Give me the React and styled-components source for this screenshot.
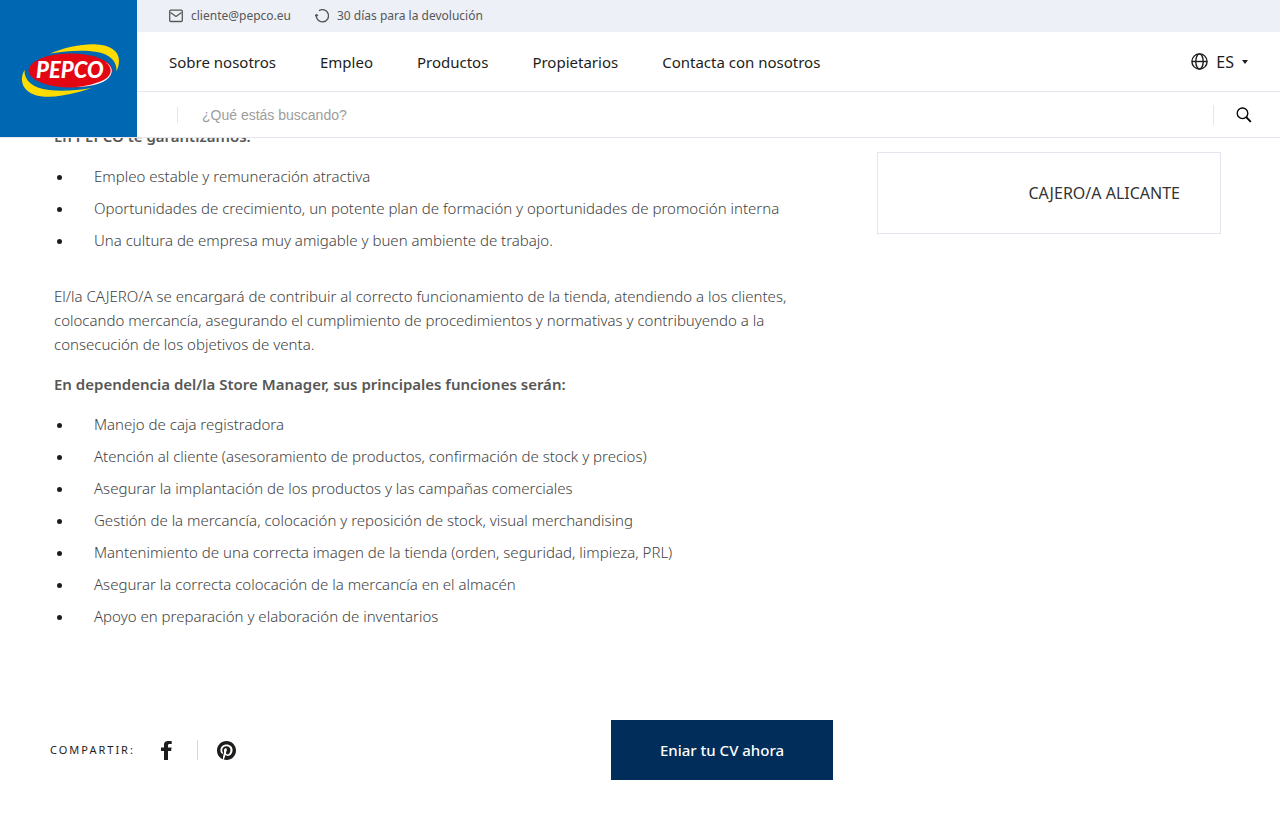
import React from 'react';
import styled, { createGlobalStyle } from 'styled-components';

const GlobalStyle = createGlobalStyle`
  *, *::before, *::after { box-sizing: border-box; }
  body {
    margin: 0;
    background: #fff;
    color: #1d1d1b;
    font-family: "Noto Sans", "Open Sans", sans-serif;
    font-size: 15px;
    line-height: 24px;
  }
  a { color: inherit; text-decoration: none; }
  button { font: inherit; cursor: pointer; }
`;

const Header = styled.header`
  position: fixed;
  inset: 0 0 auto 0;
  z-index: 10;
  display: flex;
  align-items: flex-start;
  background: #fff;
  border-bottom: 1px solid #e5e6ed;
`;

const LogoLink = styled.a`
  display: block;
  flex: none;
  width: 137px;
  height: 137px;
  background: #0068b3;
  svg { display: block; }
`;

const HeaderRows = styled.div`
  flex: 1;
  min-width: 0;
`;

const TopBar = styled.div`
  display: flex;
  align-items: center;
  gap: 24px;
  height: 32px;
  padding: 0 32px;
  background: #edf0f7;
  color: #575756;
  font-size: 12px;
`;

const TopItem = styled.div`
  display: flex;
  align-items: center;
  gap: 8px;
`;

const NavBar = styled.div`
  display: flex;
  align-items: center;
  justify-content: space-between;
  height: 60px;
  padding: 0 32px;
  border-bottom: 1px solid #e5e6ed;
`;

const Nav = styled.nav`
  display: flex;
  gap: 44px;
`;

const LangButton = styled.button`
  display: flex;
  align-items: center;
  gap: 8px;
  padding: 0;
  border: 0;
  background: none;
  color: #1d1d1b;
  font-size: 16px;
`;

const SearchBar = styled.form`
  display: flex;
  align-items: center;
  height: 45px;
  padding: 0 28px 0 40px;
`;

const SearchInput = styled.input`
  flex: 1;
  min-width: 0;
  height: 16px;
  padding: 0 24px;
  border: 0;
  border-left: 1px solid #e5e6ed;
  outline: 0;
  background: none;
  font: 14px/16px "Liberation Sans", Arial, sans-serif;
  &::placeholder { color: #9d9d9c; opacity: 1; }
`;

const SearchButton = styled.button`
  display: flex;
  align-items: center;
  height: 20px;
  padding: 0 0 0 22px;
  border: 0;
  border-left: 1px solid #e5e6ed;
  background: none;
  color: #000;
`;

const Page = styled.main`
  display: grid;
  grid-template-columns: minmax(0, 1fr) 344px;
  gap: 44px;
  align-items: start;
  padding: 124px 59px 44px 50px;
`;

const Prose = styled.article`
  padding-left: 4px;
  color: #424241;
  font-weight: 300;
`;

const Heading = styled.h2`
  margin: 0 0 16px;
  color: #575756;
  font-size: 15px;
  font-weight: 600;
`;

const Paragraph = styled.p`
  margin: 0 0 16px;
`;

const List = styled.ul`
  margin: 0 0 32px;
  padding-left: 40px;
  list-style: none;
`;

const Item = styled.li`
  position: relative;
  margin-bottom: 8px;
  &::before {
    content: "";
    position: absolute;
    top: 11px;
    left: -37px;
    width: 5px;
    height: 5px;
    border-radius: 50%;
    background: #1d1d1b;
  }
`;

const Actions = styled.div`
  display: flex;
  align-items: center;
  justify-content: space-between;
  margin-top: 92px;
`;

const Share = styled.div`
  display: flex;
  align-items: center;
`;

const ShareLabel = styled.span`
  margin-right: 26px;
  font-size: 11px;
  letter-spacing: 2px;
`;

const ShareLink = styled.a`
  display: flex;
  &:first-of-type {
    padding-right: 25px;
    margin-right: 19px;
    border-right: 1px solid #d8d8dc;
  }
`;

const ApplyButton = styled.button`
  width: 222px;
  height: 60px;
  border: 0;
  background: #002d59;
  color: #fff;
  font-weight: 500;
`;

const JobCard = styled.aside`
  margin-top: 28px;
  padding: 28px 40px;
  border: 1px solid #e5e6ed;
  color: #333;
  font-size: 16px;
  text-align: right;
`;

const navLinks = ['Sobre nosotros', 'Empleo', 'Productos', 'Propietarios', 'Contacta con nosotros'];

const benefits = [
  'Empleo estable y remuneración atractiva',
  'Oportunidades de crecimiento, un potente plan de formación y oportunidades de promoción interna',
  'Una cultura de empresa muy amigable y buen ambiente de trabajo.',
];

const duties = [
  'Manejo de caja registradora',
  'Atención al cliente (asesoramiento de productos, confirmación de stock y precios)',
  'Asegurar la implantación de los productos y las campañas comerciales',
  'Gestión de la mercancía, colocación y reposición de stock, visual merchandising',
  'Mantenimiento de una correcta imagen de la tienda (orden, seguridad, limpieza, PRL)',
  'Asegurar la correcta colocación de la mercancía en el almacén',
  'Apoyo en preparación y elaboración de inventarios',
];

const Logo = () => (
  <svg width="137" height="137" viewBox="0 0 137 137" role="img" aria-label="PEPCO">
    <path fill="#ffdc00" d="M50 53.500C64 47.500 80 44 94 44.200C110 44.500 119 51 119 60.500C119 64.500 118 68 116.500 71C117 61 110 54.500 97 52C83 49.500 66 51 50 53.500Z" />
    <path fill="#ffdc00" d="M24.500 70C20.500 77 21 85 27 90.500C35 97.500 49 98 62 95.500C73 93.500 83 91 91.500 88C77 90.500 61 91.500 49 90C32 88 24 80 24.500 70Z" />
    <ellipse cx="70.500" cy="70.500" rx="42" ry="17" fill="#e30613" />
    <path fill="#fff" d="M105 62C113 67 112.500 75 104.500 79.500C97 83.500 87 86 76 87C91 86.500 103 83.500 108.500 78C114 72 112.500 66 105 62Z" />
    <text x="36" y="78" fontFamily="Lato, Noto Sans, sans-serif" fontSize="22" fontWeight="900" fontStyle="italic" fill="#fff">PEPCO</text>
  </svg>
);

const MailIcon = () => (
  <svg width="14" height="14" viewBox="0 0 14 14" fill="none" stroke="currentColor" strokeWidth="1.300" aria-hidden="true">
    <rect x=".7" y="1.200" width="12.600" height="11.300" rx="1" />
    <path d="M1.500 3.500L7 7.500l5.500-4" />
  </svg>
);

const ReturnIcon = () => (
  <svg width="14" height="14" viewBox="0 0 14 14" fill="none" stroke="currentColor" strokeWidth="1.400" aria-hidden="true">
    <path d="M4 1.700A6.100 6.100 0 1 1 1.400 5.800M0 7l1.400-1.400L3 6.800" />
  </svg>
);

const GlobeIcon = () => (
  <svg width="17" height="17" viewBox="0 0 17 17" fill="none" stroke="currentColor" strokeWidth="1.400" aria-hidden="true">
    <circle cx="8.500" cy="8.500" r="7.600" />
    <ellipse cx="8.500" cy="8.500" rx="3.700" ry="7.600" />
    <path d="M1 8.500h15" />
  </svg>
);

const CaretIcon = () => (
  <svg width="6" height="4" viewBox="0 0 6 4" aria-hidden="true">
    <path d="M0 0h6L3 4z" fill="currentColor" />
  </svg>
);

const SearchIcon = () => (
  <svg width="16" height="16" viewBox="0 0 16 16" fill="none" stroke="currentColor" aria-hidden="true">
    <circle cx="6.500" cy="6.300" r="5.300" strokeWidth="1.300" />
    <path d="M10.200 10.200l4.600 4.600" strokeWidth="1.900" />
  </svg>
);

const FacebookIcon = () => (
  <svg width="11" height="20" viewBox="0 0 11 20" aria-hidden="true">
    <path fill="currentColor" d="M3 20V11H0V7.500h3V5C3 1.800 4.800.9 7.600.9c1.300 0 2.500.1 3.100.2v2.900H8.800C7.300 4 7 4.600 7 5.600v1.900h3.600L10.100 11H7v9z" />
  </svg>
);

const PinterestIcon = () => (
  <svg width="19" height="19" viewBox="0 0 496 496" aria-hidden="true">
    <path fill="currentColor" d="M496 248c0 137-111 248-248 248-25.600 0-50.200-3.900-73.400-11.100 10.100-16.500 25.200-43.500 30.800-65 3-11.600 15.400-59 15.400-59 8.100 15.400 31.700 28.500 56.800 28.500 74.800 0 128.700-68.800 128.700-154.300 0-81.900-66.900-143.200-152.900-143.200-107 0-163.900 71.800-163.900 150.100 0 36.400 19.400 81.700 50.300 96.100 4.700 2.200 7.200 1.200 8.300-3.300.8-3.400 5-20.300 6.900-28.100.6-2.500.3-4.700-1.700-7.100-10.100-12.500-18.300-35.300-18.300-56.600 0-54.700 41.400-107.600 112-107.600 60.900 0 103.600 41.500 103.600 100.900 0 67.100-33.900 113.600-78 113.600-24.300 0-42.600-20.100-36.700-44.800 7-29.500 20.500-61.300 20.500-82.600 0-19-10.200-34.900-31.400-34.900-24.900 0-44.900 25.700-44.900 60.200 0 22 7.400 36.800 7.400 36.800s-24.500 103.800-29 123.200c-5 21.400-3 51.600-.9 71.200C65.400 443.100 0 353.200 0 248 0 111 111 0 248 0s248 111 248 248z" />
  </svg>
);

export default function App() {
  return (
    <>
      <GlobalStyle />
      <Header>
        <LogoLink href="#inicio"><Logo /></LogoLink>
        <HeaderRows>
          <TopBar>
            <TopItem as="a" href="mailto:cliente@pepco.eu"><MailIcon />cliente@pepco.eu</TopItem>
            <TopItem><ReturnIcon />30 días para la devolución</TopItem>
          </TopBar>
          <NavBar>
            <Nav>
              {navLinks.map((label) => <a key={label} href="#menu">{label}</a>)}
            </Nav>
            <LangButton type="button"><GlobeIcon />ES<CaretIcon /></LangButton>
          </NavBar>
          <SearchBar role="search" onSubmit={(e) => e.preventDefault()}>
            <SearchInput type="text" aria-label="Buscar" placeholder="¿Qué estás buscando?" />
            <SearchButton type="submit" aria-label="Buscar"><SearchIcon /></SearchButton>
          </SearchBar>
        </HeaderRows>
      </Header>
      <Page>
        <div>
          <Prose>
            <Heading>En PEPCO te garantizamos:</Heading>
            <List>
              {benefits.map((text) => <Item key={text}>{text}</Item>)}
            </List>
            <Paragraph>
              El/la CAJERO/A se encargará de contribuir al correcto funcionamiento de la tienda, atendiendo a los clientes,
              colocando mercancía, asegurando el cumplimiento de procedimientos y normativas y contribuyendo a la
              consecución de los objetivos de venta.
            </Paragraph>
            <Heading>En dependencia del/la Store Manager, sus principales funciones serán:</Heading>
            <List>
              {duties.map((text) => <Item key={text}>{text}</Item>)}
            </List>
          </Prose>
          <Actions>
            <Share>
              <ShareLabel>COMPARTIR:</ShareLabel>
              <ShareLink href="#facebook" aria-label="Facebook"><FacebookIcon /></ShareLink>
              <ShareLink href="#pinterest" aria-label="Pinterest"><PinterestIcon /></ShareLink>
            </Share>
            <ApplyButton type="button">Eniar tu CV ahora</ApplyButton>
          </Actions>
        </div>
        <JobCard>CAJERO/A ALICANTE</JobCard>
      </Page>
    </>
  );
}
